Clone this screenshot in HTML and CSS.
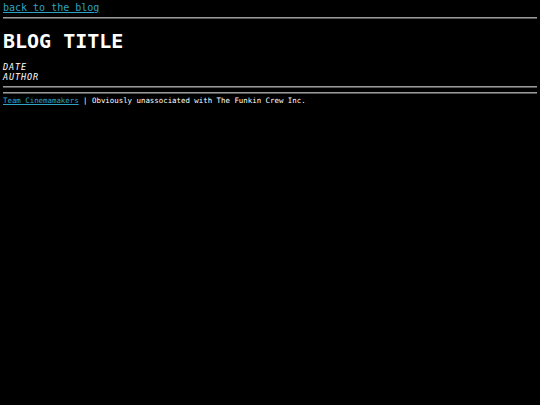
FILE: index.html
```html
<!DOCTYPE html>
<html>
<head>
<meta charset="utf-8">
<link rel="stylesheet" href="styles.css">
<title>Blog Title</title>
</head>
<body>
<nav class="top"><a class="back" href="#">back to the blog</a></nav>
<hr class="rule">
<h1 class="title">BLOG TITLE</h1>
<div class="meta">
  <div class="meta-line">DATE</div>
  <div class="meta-line">AUTHOR</div>
</div>
<hr class="rule rule-a">
<hr class="rule rule-b">
<footer class="foot"><a class="team" href="#">Team Cinemamakers</a> | Obviously unassociated with The Funkin Crew Inc.</footer>
</body>
</html>
```
FILE: styles.css
```css
html, body {
  background: #000;
}
body {
  margin: 0;
  padding: 0 3px;
  color: #fff;
  font-family: "DejaVu Sans Mono", "Liberation Mono", monospace;
}
.top {
  padding-top: 2px;
  font-size: 10px;
  line-height: 12px;
}
.back, .team {
  color: #2fa3c4;
  text-decoration: underline;
}
.rule {
  border: none;
  height: 0;
  border-top: 1px solid #9a9a9a;
  border-bottom: 1px solid #555;
  margin: 3px 0 0;
}
.title {
  margin: 10px 0 0;
  font-size: 20px;
  line-height: 24px;
  font-weight: bold;
  letter-spacing: 0;
}
.meta {
  margin-top: 9px;
  font-size: 8.5px;
  line-height: 10px;
  letter-spacing: 0.9px;
  font-style: italic;
}
.rule-a {
  margin-top: 4px;
}
.rule-b {
  margin-top: 4px;
}
.foot {
  margin-top: 2px;
  font-size: 7.4px;
  line-height: 10px;
}
```
